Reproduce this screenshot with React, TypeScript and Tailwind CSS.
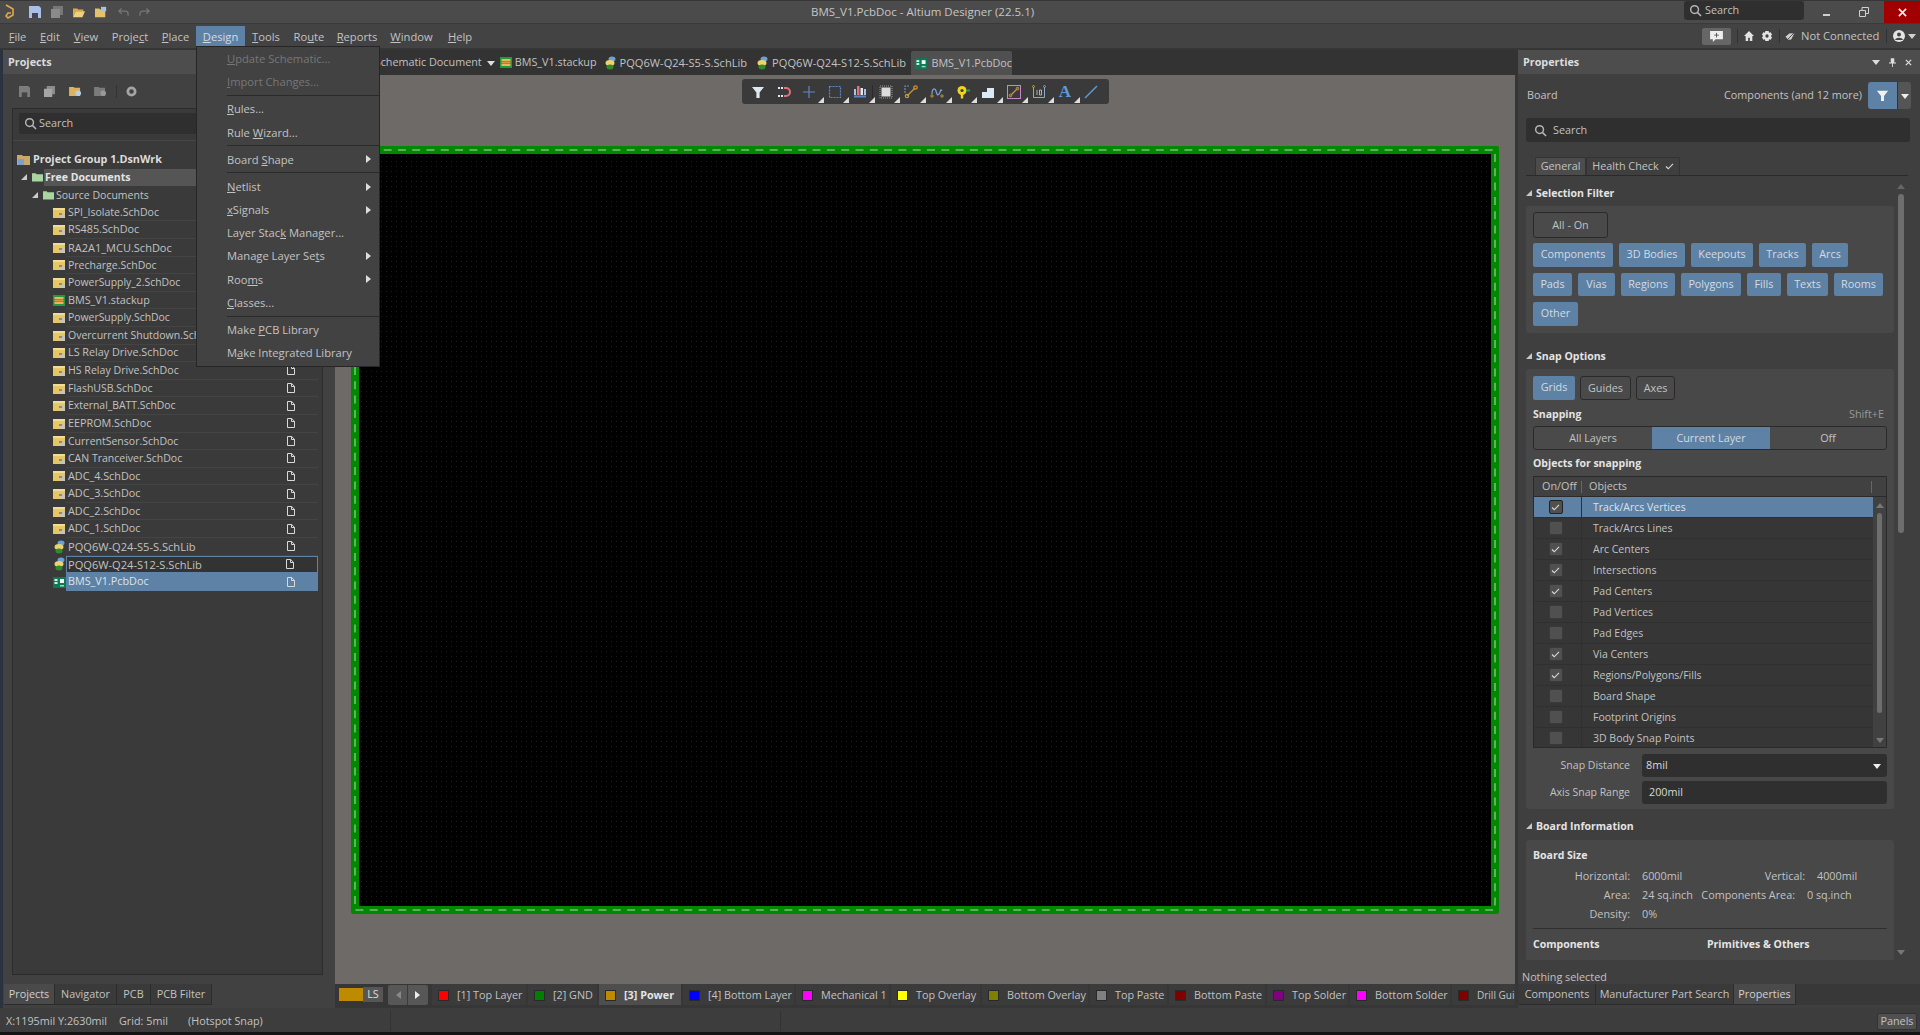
import { ReactNode } from 'react';

const Search = ({ className = '' }: { className?: string }) => (
  <svg viewBox="0 0 14 14" className={`w-[13px] h-[13px] ${className}`} fill="none" stroke="#b5b5b5" strokeWidth="1.6">
    <circle cx="6" cy="6" r="4.2" />
    <path d="M9 9l4 4" />
  </svg>
);

const Tri = ({ dir = 'right', className = '' }: { dir?: 'right' | 'down' | 'up' | 'corner'; className?: string }) => {
  const d = { right: 'M1 0l5 4-5 4z', down: 'M0 2h8L4 7z', up: 'M0 6h8L4 1z', corner: 'M6 1v6H0z' }[dir];
  return (
    <svg viewBox="0 0 8 8" className={`w-[8px] h-[8px] ${className}`} fill="currentColor">
      <path d={d} />
    </svg>
  );
};

const SchIcon = () => (
  <svg viewBox="0 0 12 10" className="w-[12px] h-[10px]">
    <rect width="12" height="10" fill="#e6c766" />
    <rect x="0" y="0" width="12" height="2" fill="#f0dc9a" />
    <rect x="6" y="5" width="6" height="5" fill="#c9c4b4" />
    <rect x="6" y="5" width="3" height="2" fill="#9a8b55" />
  </svg>
);

const StackIcon = () => (
  <svg viewBox="0 0 12 11" className="w-[12px] h-[11px]">
    <rect width="12" height="11" fill="#1f9a3c" />
    <rect x="1.5" y="2" width="9" height="2" fill="#efb45a" />
    <rect x="1.5" y="4.5" width="9" height="2" fill="#d89a45" />
    <rect x="1.5" y="7" width="9" height="2" fill="#efb45a" />
  </svg>
);

const LibIcon = () => (
  <svg viewBox="0 0 12 14" className="w-[12px] h-[14px]">
    <ellipse cx="8" cy="3" rx="3.5" ry="2.5" fill="#6aa0dc" />
    <ellipse cx="6" cy="7" rx="4.5" ry="3" fill="#eed36a" />
    <ellipse cx="6" cy="11" rx="3.5" ry="2.5" fill="#2f8a2f" />
  </svg>
);

const PcbIcon = () => (
  <svg viewBox="0 0 13 11" className="w-[13px] h-[11px]">
    <rect width="13" height="11" fill="#0c7a55" />
    <rect x="1.5" y="2" width="3" height="2" fill="#d5efe5" />
    <rect x="1.5" y="5" width="3" height="2" fill="#d5efe5" />
    <rect x="7" y="2" width="4" height="4" fill="#eef7f3" />
    <rect x="7" y="8" width="4" height="1.5" fill="#9fd8c3" />
  </svg>
);

const FolderIcon = ({ color = '#a8d5a0' }: { color?: string }) => (
  <svg viewBox="0 0 12 10" className="w-[11px] h-[10px]">
    <path d="M0 1h4l1 1h7v8H0z" fill={color} />
  </svg>
);

const DocIcon = () => (
  <svg viewBox="0 0 8 10" className="w-[8px] h-[10px]" fill="none" stroke="#d8d8d8" strokeWidth="1">
    <path d="M.5.5h4.2l2.8 2.8v6.2h-7zM4.5.5v3h3" />
  </svg>
);

const Check = () => (
  <svg viewBox="0 0 10 8" className="w-[9px] h-[7px]" fill="none" stroke="#d8d8d8" strokeWidth="1.3">
    <path d="M1 4l2.6 2.6L9 1" />
  </svg>
);

const toolbarIcons: ReactNode[] = [
  <path key="f" d="M1 2h12L8.6 7.5V13H5.4V7.5z" fill="#dfe8f0" />,
  <g key="m" fill="none" strokeWidth="2">
    <path d="M7 3h2a4 4 0 010 8H7" stroke="#e2717a" />
    <path d="M1 3h2M1 11h2" stroke="#dfe8f0" />
    <path d="M4 3h2M4 11h2" stroke="#dfe8f0" />
  </g>,
  <path key="p" d="M7 1v12M1 7h12" stroke="#5f86c4" strokeWidth="1.2" fill="none" />,
  <rect key="r" x="1.5" y="1.5" width="11" height="11" fill="none" stroke="#5f86c4" strokeWidth="1.2" strokeDasharray="2 1" />,
  <g key="b">
    <rect x="4" y="1" width="2.5" height="9" fill="#e2717a" />
    <rect x="7.5" y="3" width="2.5" height="7" fill="#dfe8f0" />
    <rect x="1" y="4" width="2" height="6" fill="#a9c4de" />
    <rect x="11" y="4" width="2" height="6" fill="#a9c4de" />
    <rect x="1" y="10.5" width="12" height="2" fill="#5f86c4" />
  </g>,
  <g key="c">
    <rect x="1" y="1" width="12" height="12" fill="none" stroke="#999" strokeDasharray="1 1" />
    <rect x="2.5" y="2.5" width="9" height="9" fill="#dcdcdc" />
  </g>,
  <g key="t" fill="none" stroke="#c8963a" strokeWidth="1.2">
    <path d="M3 11l8-8" />
    <path d="M1 8V1h5" stroke="#6b8fc0" strokeDasharray="2 1" />
    <circle cx="3" cy="11" r="1.7" />
    <circle cx="11.5" cy="2.5" r="1.7" />
  </g>,
  <g key="w" fill="none">
    <path d="M2 9c0-6 3-6 4-3s1 5 3 3 1-6 3-3" stroke="#7f9fc9" strokeWidth="1.3" />
    <circle cx="2" cy="11" r="1.2" stroke="#c8963a" />
    <circle cx="12" cy="11" r="1.2" stroke="#c8963a" />
  </g>,
  <g key="y">
    <circle cx="6" cy="5.5" r="4.5" fill="#f2d21e" />
    <circle cx="6" cy="5.5" r="1.6" fill="#3a3a3a" />
    <rect x="4.8" y="9" width="2.4" height="4.5" fill="#f2d21e" />
    <rect x="10" y="4.5" width="4" height="2" fill="#2e9e3e" />
  </g>,
  <path key="s" d="M1 13V7h5V3h7v10z" fill="#dbe9f4" />,
  <g key="q" fill="none">
    <rect x=".5" y=".5" width="13" height="13" stroke="#c58ac5" />
    <path d="M3.5 10.5l7-7" stroke="#c8963a" strokeWidth="1.3" />
    <circle cx="3.5" cy="10.5" r="1.3" fill="#7a5a2a" stroke="#c8963a" />
    <circle cx="10.5" cy="3.5" r="1.3" fill="#7a5a2a" stroke="#c8963a" />
  </g>,
  <g key="d" fill="none" stroke="#8fa9c9" strokeWidth="1">
    <path d="M1.5 2v10.5h11V2" />
    <circle cx="1.5" cy="1.5" r="1" stroke="#c8963a" />
    <circle cx="12.5" cy="1.5" r="1" stroke="#c8963a" />
    <path d="M5 5v5M7.5 5h2v5h-2z" stroke="#b0b0b0" />
  </g>,
  null,
  <path key="l" d="M1 13L13 1" stroke="#5f9ad8" strokeWidth="1.5" fill="none" />,
];

const menus = [
  { pre: '', u: 'F', post: 'ile', w: 'w-[31px]' },
  { pre: '', u: 'E', post: 'dit', w: 'w-[34px]' },
  { pre: '', u: 'V', post: 'iew', w: 'w-[38px]' },
  { pre: 'Proje', u: 'c', post: 't', w: 'w-[50px]' },
  { pre: '', u: 'P', post: 'lace', w: 'w-[41px]' },
  { pre: '', u: 'D', post: 'esign', w: 'w-[49px]', active: true },
  { pre: '', u: 'T', post: 'ools', w: 'w-[42px]' },
  { pre: 'Ro', u: 'u', post: 'te', w: 'w-[44px]' },
  { pre: '', u: 'R', post: 'eports', w: 'w-[52px]' },
  { pre: '', u: 'W', post: 'indow', w: 'w-[57px]' },
  { pre: '', u: 'H', post: 'elp', w: 'w-[40px]' },
];

const designMenu = [
  { pre: '', u: 'U', post: 'pdate Schematic...', off: true },
  { pre: '', u: 'I', post: 'mport Changes...', off: true },
  { sep: true },
  { pre: '', u: 'R', post: 'ules...' },
  { pre: 'Rule ', u: 'W', post: 'izard...' },
  { sep: true },
  { pre: 'Board ', u: 'S', post: 'hape', sub: true },
  { sep: true },
  { pre: '', u: 'N', post: 'etlist', sub: true },
  { pre: '', u: 'x', post: 'Signals', sub: true },
  { pre: 'Layer Stac', u: 'k', post: ' Manager...' },
  { pre: 'Manage Layer Se', u: 't', post: 's', sub: true },
  { pre: 'Roo', u: 'm', post: 's', sub: true },
  { pre: '', u: 'C', post: 'lasses...' },
  { sep: true },
  { pre: 'Make ', u: 'P', post: 'CB Library' },
  { pre: 'M', u: 'a', post: 'ke Integrated Library' },
];

const files = [
  ['SPI_Isolate.SchDoc', 'sch', 'text-[10.5px]'],
  ['RS485.SchDoc', 'sch', ''],
  ['RA2A1_MCU.SchDoc', 'sch', 'text-[11px]'],
  ['Precharge.SchDoc', 'sch', 'text-[10.5px]'],
  ['PowerSupply_2.SchDoc', 'sch', 'text-[10.4px]'],
  ['BMS_V1.stackup', 'stack', ''],
  ['PowerSupply.SchDoc', 'sch', 'text-[10.4px]'],
  ['Overcurrent Shutdown.SchDoc', 'sch', 'text-[10.5px]'],
  ['LS Relay Drive.SchDoc', 'sch', ''],
  ['HS Relay Drive.SchDoc', 'sch', 'text-[10.6px]'],
  ['FlashUSB.SchDoc', 'sch', 'text-[10.5px]'],
  ['External_BATT.SchDoc', 'sch', 'text-[10.4px]'],
  ['EEPROM.SchDoc', 'sch', ''],
  ['CurrentSensor.SchDoc', 'sch', 'text-[10.5px]'],
  ['CAN Tranceiver.SchDoc', 'sch', 'text-[10.5px]'],
  ['ADC_4.SchDoc', 'sch', ''],
  ['ADC_3.SchDoc', 'sch', ''],
  ['ADC_2.SchDoc', 'sch', ''],
  ['ADC_1.SchDoc', 'sch', ''],
  ['PQQ6W-Q24-S5-S.SchLib', 'lib', 'text-[11.1px]'],
  ['PQQ6W-Q24-S12-S.SchLib', 'lib', 'text-[11.1px]'],
  ['BMS_V1.PcbDoc', 'pcb', ''],
];

const layers = [
  { name: '[1] Top Layer', color: 'bg-[#ff0000]', w: 'w-[94px]' },
  { name: '[2] GND', color: 'bg-[#008000]', w: 'w-[69px]' },
  { name: '[3] Power', color: 'bg-[#c08a00]', w: 'w-[82px]', active: true },
  { name: '[4] Bottom Layer', color: 'bg-[#0000ff]', w: 'w-[111px]' },
  { name: 'Mechanical 1', color: 'bg-[#ff00ff]', w: 'w-[93px]' },
  { name: 'Top Overlay', color: 'bg-[#ffff00]', w: 'w-[89px]' },
  { name: 'Bottom Overlay', color: 'bg-[#808000]', w: 'w-[106px]' },
  { name: 'Top Paste', color: 'bg-[#808080]', w: 'w-[77px]' },
  { name: 'Bottom Paste', color: 'bg-[#800000]', w: 'w-[96px]' },
  { name: 'Top Solder', color: 'bg-[#800080]', w: 'w-[81px]' },
  { name: 'Bottom Solder', color: 'bg-[#ff00ff]', w: 'w-[100px]' },
  { name: 'Drill Gui', color: 'bg-[#800000]', w: 'w-[63px]', size: 'text-[10px]' },
];

const filterRows = [
  [
    ['Components', 'w-[80px]'],
    ['3D Bodies', 'w-[66px]'],
    ['Keepouts', 'w-[62px]'],
    ['Tracks', 'w-[47px]'],
    ['Arcs', 'w-[36px]'],
  ],
  [
    ['Pads', 'w-[39px]'],
    ['Vias', 'w-[37px]'],
    ['Regions', 'w-[54px]'],
    ['Polygons', 'w-[60px]'],
    ['Fills', 'w-[34px]'],
    ['Texts', 'w-[41px]'],
    ['Rooms', 'w-[49px]'],
  ],
  [['Other', 'w-[45px]']],
];

const snapObjects: [string, boolean][] = [
  ['Track/Arcs Vertices', true],
  ['Track/Arcs Lines', false],
  ['Arc Centers', true],
  ['Intersections', true],
  ['Pad Centers', true],
  ['Pad Vertices', false],
  ['Pad Edges', false],
  ['Via Centers', true],
  ['Regions/Polygons/Fills', true],
  ['Board Shape', false],
  ['Footprint Origins', false],
  ['3D Body Snap Points', false],
];

const Section = ({ title }: { title: string }) => (
  <div className="flex items-center h-[14px] font-bold text-[10.5px] text-[#e4e4e4]">
    <Tri dir="corner" className="text-[#c8c8c8] mr-[1px] w-[7px] h-[7px]" />
    <span className="ml-[1px]">{title}</span>
  </div>
);

const BlueBtn = ({ label, w }: { label: string; w: string }) => (
  <div className={`${w} h-[23.5px] flex items-center justify-center rounded-[2px] bg-[#5e82a5] text-[#d3dbe3]`}>{label}</div>
);

const GrayBtn = ({ label, w, h = 'h-[24px]' }: { label: string; w: string; h?: string }) => (
  <div className={`${w} ${h} flex items-center justify-center rounded-[3px] bg-[#4a4a4a] border border-[#2a2a2a]`}>{label}</div>
);

const BottomTab = ({ label, w, active = false }: { label: string; w: string; active?: boolean }) => (
  <div className={`${w} h-[21px] pt-[1px] flex items-center justify-center whitespace-nowrap border-b border-r border-[#2c2c2c] ${active ? 'bg-[#4a4a4a] text-[#d0d0d0]' : 'bg-[#3a3a3a]'}`}>
    {label}
  </div>
);

export default function App() {
  return (
    <div className="relative w-[1920px] h-[1035px] flex flex-col overflow-hidden bg-[#363636] text-[#c2c2c2] text-[10.8px] leading-none font-['Open_Sans','Noto_Sans',sans-serif]">
      {/* title bar */}
      <div className="h-[23px] mt-[1px] shrink-0 flex items-center bg-[#4b4b4b] border-b border-[#3a3a3a]">
        <div className="w-[811px] flex items-center pl-[4px] gap-[10px] shrink-0">
          <svg viewBox="0 0 12 16" className="w-[12px] h-[16px]" fill="none" stroke="#e0a94a" strokeWidth="1.6">
            <path d="M2 1l7 4v6l-5 3-2-2 2-3h3" />
          </svg>
          <svg viewBox="0 0 12 12" className="w-[12px] h-[12px] ml-[3px]"><path d="M0 0h10l2 2v10H0z" fill="#a9bfe6" /><rect x="3" y="7" width="6" height="5" fill="#445" /></svg>
          <svg viewBox="0 0 12 12" className="w-[12px] h-[12px]"><path d="M2 0h10v9H2z" fill="#777" /><path d="M0 3h9v9H0z" fill="#8a8a8a" /></svg>
          <svg viewBox="0 0 14 12" className="w-[12px] h-[12px]"><path d="M0 2h5l1 1h6v2H3l-3 7z" fill="#d9a94c" /><path d="M3 5h11l-3 7H0z" fill="#f0cf7f" /></svg>
          <svg viewBox="0 0 14 12" className="w-[12px] h-[12px]"><path d="M0 2h5l1 1h6v9H0z" fill="#e4c26c" /><rect x="7" y="0" width="6" height="5" fill="#a9bfe6" /></svg>
          <svg viewBox="0 0 12 10" className="w-[11px] h-[10px] ml-[1px]" fill="none" stroke="#777" strokeWidth="1.4"><path d="M4 1L1 4l3 3M1 4h7a3 3 0 013 3v2" /></svg>
          <svg viewBox="0 0 12 10" className="w-[11px] h-[10px]" fill="none" stroke="#777" strokeWidth="1.4"><path d="M8 1l3 3-3 3M11 4H4a3 3 0 00-3 3v2" /></svg>
        </div>
        <div className="text-[11.5px] text-[#c6c6c6] whitespace-nowrap">BMS_V1.PcbDoc - Altium Designer (22.5.1)</div>
        <div className="ml-auto flex items-center h-full">
          <div className="w-[120px] h-[19px] mb-[3px] flex items-center pl-[5px] gap-[3px] bg-[#2f2f2f] rounded-[3px]">
            <Search />
            <span>Search</span>
          </div>
          <div className="w-[80px] pl-[4px] flex justify-center gap-[29px] items-center">
            <div className="w-[7px] h-[2px] mt-[6px] bg-[#d0d0d0]" />
            <svg viewBox="0 0 10 10" className="w-[10px] h-[10px]" fill="none" stroke="#d0d0d0"><path d="M.5 3.5h6v6h-6zM3 3.5v-3h6.5v6H6.5" /></svg>
          </div>
          <div className="w-[36px] h-full flex items-center justify-center bg-[#a00000]">
            <svg viewBox="0 0 10 10" className="w-[9px] h-[9px]" stroke="#f2f2f2" strokeWidth="1.8"><path d="M1 1l8 8M9 1l-8 8" /></svg>
          </div>
        </div>
      </div>

      {/* menu bar */}
      <div className="h-[24px] shrink-0 flex items-center pl-[2px] bg-[#434343] text-[11.2px]">
        {menus.map((m) => (
          <div key={m.u + m.post} className={`${m.w} h-[21px] pt-[1px] flex items-center justify-center ${m.active ? 'bg-[#5e82a5] text-[#d3dbe3]' : ''}`}>
            <span>{m.pre}<u>{m.u}</u>{m.post}</span>
          </div>
        ))}
        <div className="ml-auto flex items-center h-full">
          <div className="w-[29px] h-[17px] flex items-center justify-center bg-[#666] rounded-[2px]">
            <svg viewBox="0 0 14 12" className="w-[13px] h-[11px]"><path d="M0 0h14v9H6l-3 3V9H0z" fill="#eee" /><path d="M7 2v5M4.5 4.5h5" stroke="#555" /></svg>
          </div>
          <div className="w-px h-[14px] bg-[#333] ml-[6px]" />
          <svg viewBox="0 0 12 12" className="w-[10px] h-[10px] ml-[6px]" fill="#e4e4e4"><path d="M6 0l6 6h-2v6H7V8H5v4H2V6H0z" /></svg>
          <svg viewBox="0 0 12 12" className="w-[10px] h-[10px] ml-[8px]"><path d="M4 0h4l.5 2 2-.5 1.5 3-1.5 1.5 1.5 1.5-1.5 3-2-.5L8 12H4l-.5-2-2 .5L0 7.5 1.5 6 0 4.5l1.5-3 2 .5z" fill="#e4e4e4" /><circle cx="6" cy="6" r="2" fill="#434343" /></svg>
          <div className="w-px h-[14px] bg-[#333] ml-[7px]" />
          <svg viewBox="0 0 12 10" className="w-[11px] h-[9px] ml-[5px]" fill="#d0d0d0"><path d="M0 5l5-4h6L7 9H3zM1 10L11 0" stroke="#434343" /></svg>
          <span className="ml-[5px] w-[80px] whitespace-nowrap">Not Connected</span>
          <div className="w-px h-[14px] bg-[#333] ml-[5px]" />
          <svg viewBox="0 0 12 12" className="w-[12px] h-[12px] ml-[6px]"><circle cx="6" cy="6" r="6" fill="#e4e4e4" /><circle cx="6" cy="4.5" r="2" fill="#434343" /><path d="M2 10c1-3 7-3 8 0" fill="#434343" /></svg>
          <Tri dir="down" className="text-[#d0d0d0] ml-[3px] mr-[4px]" />
        </div>
      </div>

      {/* panels */}
      <div className="flex-1 min-h-0 flex mt-[2px]">
        {/* projects panel */}
        <div className="w-[335px] shrink-0 flex flex-col border-l-[3px] border-[#2b3240] bg-[#414141]">
          <div className="h-[24px] shrink-0 flex items-center pl-[5px] bg-[#4d4d4d] font-bold text-[#dcdcdc]">Projects</div>
          <div className="h-[34px] shrink-0 flex items-center pl-[16px]">
            <svg viewBox="0 0 12 12" className="w-[11px] h-[11px]"><path d="M0 0h10l2 2v10H0z" fill="#7d7d7d" /><rect x="3" y="7" width="6" height="5" fill="#444" /></svg>
            <svg viewBox="0 0 12 12" className="w-[11px] h-[11px] ml-[14px]"><path d="M3 0h9v9H3z" fill="#8c8c8c" /><path d="M0 3h9v9H0z" fill="#a5a5a5" /></svg>
            <svg viewBox="0 0 14 12" className="w-[13px] h-[11px] ml-[14px]"><path d="M0 1h5l1 1h6v9H0z" fill="#dcb25f" /><circle cx="10" cy="8" r="3" fill="#b9cfe6" /></svg>
            <svg viewBox="0 0 14 12" className="w-[13px] h-[11px] ml-[12px]"><path d="M0 1h5l1 1h6v9H0z" fill="#7b7b7b" /><circle cx="10" cy="8" r="3" fill="#999" /></svg>
            <div className="w-px h-[13px] bg-[#333] ml-[9px]" />
            <svg viewBox="0 0 12 12" className="w-[11px] h-[11px] ml-[9px]"><circle cx="6" cy="6" r="4" fill="none" stroke="#a5a5a5" strokeWidth="3" /></svg>
          </div>
          <div className="flex-1 min-h-0 ml-[9px] mr-[12px] border border-[#2c2c2c] bg-[#3a3a3a] overflow-hidden">
            <div className="h-[21px] mt-[4px] mx-[6px] flex items-center pl-[5px] gap-[2px] rounded-[2px] bg-[#2f2f2f]">
              <Search />
              <span>Search</span>
            </div>
            <div className="h-px mt-[6px] bg-[#464646]" />
            <div className="mt-[10px]">
              <div className="h-[17.6px] flex items-center pl-[4px] font-bold text-[#dcdcdc]">
                <svg viewBox="0 0 13 11" className="w-[13px] h-[11px]"><path d="M0 1h5l1 1h7v9H0z" fill="#c8a96a" /><rect x="1" y="5" width="6" height="6" fill="#7ea0c8" /></svg>
                <span className="ml-[3px]">Project Group 1.DsnWrk</span>
              </div>
              <div className="h-[17.6px] flex items-center pl-[8px] font-bold text-[10.5px] text-[#e4e4e4]">
                <Tri dir="corner" className="w-[6px] h-[6px] text-[#ccc]" />
                <span className="ml-[3px]"><FolderIcon /></span>
                <div className="ml-[1px] mr-[4px] pl-[1px] flex-1 h-full flex items-center bg-[#555]">Free Documents</div>
              </div>
              <div className="h-[17.6px] flex items-center pl-[19px] text-[10.5px]">
                <Tri dir="corner" className="w-[6px] h-[6px] text-[#ccc]" />
                <span className="ml-[3px]"><FolderIcon /></span>
                <span className="ml-[2px]">Source Documents</span>
              </div>
              {files.map(([name, kind, size]) => {
                const selected = name === 'BMS_V1.PcbDoc';
                const focused = name === 'PQQ6W-Q24-S12-S.SchLib';
                return (
                  <div key={name} className="h-[17.6px] flex items-center pl-[40px] mr-[4px]">
                    <span className="w-[13px] shrink-0 flex items-center">
                      {kind === 'sch' && <SchIcon />}
                      {kind === 'stack' && <StackIcon />}
                      {kind === 'lib' && <LibIcon />}
                      {kind === 'pcb' && <PcbIcon />}
                    </span>
                    <div className={`flex-1 h-full flex items-center pr-[23px] border-b ${selected ? 'pl-[2px] bg-[#5e82a5] border-[#5e82a5] text-[#dbe3ea]' : focused ? 'pl-[1px] border border-[#5e82a5] bg-[#333]' : 'pl-[2px] border-[#444]'}`}>
                      <span className={`flex-1 whitespace-nowrap ${size}`}>{name}</span>
                      <DocIcon />
                    </div>
                  </div>
                );
              })}
            </div>
          </div>
          <div className="h-[9px] shrink-0" />
          <div className="h-[21px] shrink-0 flex ml-px">
            <BottomTab label="Projects" w="w-[51px]" active />
            <BottomTab label="Navigator" w="w-[62px]" />
            <BottomTab label="PCB" w="w-[34px]" />
            <BottomTab label="PCB Filter" w="w-[61px]" />
          </div>
          <div className="h-[3px] shrink-0" />
        </div>

        {/* documents and canvas */}
        <div className="w-[1183px] shrink-0 flex flex-col">
          <div className="h-[25px] shrink-0 flex items-center justify-end pr-[503px] bg-[#333] border-r-[3px] border-[#333]">
            <span className="whitespace-nowrap">Schematic Document</span>
            <Tri dir="down" className="ml-[5px] text-[#ddd]" />
            <span className="ml-[5px]"><StackIcon /></span>
            <span className="ml-[3px] whitespace-nowrap">BMS_V1.stackup</span>
            <span className="ml-[7px]"><LibIcon /></span>
            <span className="ml-[4px] whitespace-nowrap text-[11.1px]">PQQ6W-Q24-S5-S.SchLib</span>
            <span className="ml-[9px]"><LibIcon /></span>
            <span className="ml-[4px] whitespace-nowrap text-[11.1px]">PQQ6W-Q24-S12-S.SchLib</span>
            <div className="ml-[5px] w-[101px] shrink-0 h-[24px] mt-px flex items-center pl-[4px] gap-[4px] bg-[#505050] rounded-t-[2px]">
              <PcbIcon />
              <span className="whitespace-nowrap">BMS_V1.PcbDoc</span>
            </div>
          </div>
          <div className="relative flex-1 min-h-0 mr-[3px] pt-[71px] pl-[16px] bg-[#6e6a68]">
            <div className="absolute left-[407px] top-[4px] w-[367px] h-[25px] flex items-center pl-[9px] bg-[#3a3a3a] rounded-[3px]">
              {toolbarIcons.map((icon, i) => (
                <div key={i} className="relative w-[25.7px] h-full flex items-center">
                  {icon ? (
                    <svg viewBox="0 0 14 14" className="w-[14px] h-[14px]">{icon}</svg>
                  ) : (
                    <span className="w-[14px] text-center font-['Liberation_Serif',serif] font-bold text-[17px] text-[#5f9ad8]">A</span>
                  )}
                  {i > 1 && i < 13 && <Tri dir="corner" className="absolute right-[2px] bottom-0 w-[5px] h-[5px] text-[#ddd]" />}
                  {i === 4 && <div className="absolute right-[6px] top-[6px] w-px h-[13px] bg-[#2a2a2a]" />}
                </div>
              ))}
            </div>
            <div className="relative w-[1148px] h-[768px] border-[8px] border-[#008800] rounded-[2px] bg-black bg-[radial-gradient(#1c1c1c_0.6px,transparent_0.6px)] bg-[length:5px_5px]">
              <svg className="absolute -left-[8px] -top-[8px] w-[1148px] h-[768px]" fill="none">
                <rect x="4" y="4" width="1140" height="760" stroke="#7db87d" strokeWidth="1.6" strokeDasharray="8 6.3" />
              </svg>
            </div>
          </div>
          <div className="h-[21px] shrink-0 flex items-center pl-[4px] mr-[3px]">
            <div className="w-[24px] h-[13px] bg-[#bd8a00]" />
            <div className="w-[20px] h-[15px] flex items-center justify-center bg-[#565656] text-[#ddd]">LS</div>
            <div className="ml-[5px] w-[40px] h-[20px] flex rounded-[2px] bg-[#575757]">
              <div className="w-[20px] flex items-center justify-center border-r border-[#3a3a3a]"><Tri dir="right" className="rotate-180 text-[#888]" /></div>
              <div className="w-[20px] flex items-center justify-center"><Tri dir="right" className="text-[#eee]" /></div>
            </div>
            <div className="ml-[4px] flex gap-[2px] h-full">
              {layers.map((l) => (
                <div key={l.name} className={`${l.w} ${l.size ?? ''} pt-[1px] shrink-0 flex items-center pl-[6px] whitespace-nowrap ${l.active ? 'bg-[#4e4e4e] font-bold text-[#e4e4e4]' : 'bg-[#3b3b3b]'}`}>
                  <span className={`${l.color} w-[11px] h-[11px] shrink-0 border border-[#2a2a2a]`} />
                  <span className="ml-[8px]">{l.name}</span>
                </div>
              ))}
            </div>
          </div>
          <div className="h-[3px] shrink-0" />
        </div>

        {/* properties panel */}
        <div className="flex-1 min-w-0 flex flex-col bg-[#3f3f3f]">
          <div className="h-[24px] shrink-0 flex items-center pl-[5px] pr-[8px] bg-[#4d4d4d] font-bold text-[#dcdcdc]">
            <span>Properties</span>
            <Tri dir="down" className="ml-auto text-[#ddd]" />
            <svg viewBox="0 0 8 10" className="w-[7px] h-[9px] ml-[9px]" fill="#ddd"><path d="M2 0h4v5h2v1H4.5v4h-1V6H0V5h2z" /></svg>
            <svg viewBox="0 0 8 8" className="w-[7px] h-[7px] ml-[9px]" stroke="#ddd" strokeWidth="1.5"><path d="M1 1l6 6M7 1L1 7" /></svg>
          </div>
          <div className="h-[27px] mt-[8px] mx-[9px] flex items-center shrink-0">
            <span>Board</span>
            <span className="ml-auto whitespace-nowrap">Components (and 12 more)</span>
            <div className="ml-[6px] w-[29px] h-full flex items-center justify-center rounded-l-[3px] bg-[#5e82a5]">
              <svg viewBox="0 0 14 14" className="w-[13px] h-[13px]"><path d="M1 2h12L8.6 7.5V13H5.4V7.5z" fill="#f2f2f2" /></svg>
            </div>
            <div className="w-[14px] h-full flex items-center justify-center rounded-r-[3px] bg-[#555] border-l border-[#333]">
              <Tri dir="down" className="text-[#eee]" />
            </div>
          </div>
          <div className="h-[24px] mt-[9px] ml-[8px] mr-[10px] shrink-0 flex items-center pl-[8px] rounded-[3px] bg-[#2f2f2f]">
            <Search />
            <span className="ml-[6px]">Search</span>
          </div>
          <div className="h-[19px] mt-[15px] ml-[8px] mr-[12px] shrink-0 flex pl-[9px] border-b border-[#2a2a2a]">
            <div className="w-[51px] flex items-center justify-center rounded-t-[2px] bg-[#4c4c4c] border border-b-0 border-[#333]">General</div>
            <div className="w-[94px] flex items-center justify-center gap-[6px] rounded-t-[2px] border border-b-0 border-[#333]">
              <span>Health Check</span>
              <Check />
            </div>
          </div>
          <div className="flex-1 min-h-0 flex">
            <div className="w-[376px] shrink-0 pl-[8px] overflow-hidden">
              <div className="mt-[10px]"><Section title="Selection Filter" /></div>
              <div className="mt-[6px] h-[127px] px-[7px] pt-[6px] rounded-[3px] bg-[#484848]">
                <GrayBtn label="All - On" w="w-[75px]" h="h-[26px]" />
                <div className="mt-[5px] flex flex-col gap-[6px]">
                  {filterRows.map((row, i) => (
                    <div key={i} className="flex gap-[6px]">
                      {row.map(([label, w]) => <BlueBtn key={label} label={label} w={w} />)}
                    </div>
                  ))}
                </div>
              </div>
              <div className="mt-[16px]"><Section title="Snap Options" /></div>
              <div className="mt-[6px] h-[440px] px-[7px] pt-[7px] rounded-[3px] bg-[#484848]">
                <div className="flex gap-[5px]">
                  <BlueBtn label="Grids" w="w-[42px]" />
                  <GrayBtn label="Guides" w="w-[51px]" />
                  <GrayBtn label="Axes" w="w-[39px]" />
                </div>
                <div className="mt-[7px] h-[14px] flex items-center justify-between pr-[3px]">
                  <span className="font-bold text-[10.5px] text-[#e4e4e4]">Snapping</span>
                  <span className="text-[#999]">Shift+E</span>
                </div>
                <div className="mt-[5px] h-[24px] flex rounded-[3px] border border-[#2a2a2a] bg-[#4a4a4a]">
                  <div className="w-[118px] flex items-center justify-center">All Layers</div>
                  <div className="w-[118px] flex items-center justify-center bg-[#5e82a5] text-[#d3dbe3]">Current Layer</div>
                  <div className="flex-1 flex items-center justify-center">Off</div>
                </div>
                <div className="mt-[6px] h-[14px] flex items-center font-bold text-[10.5px] text-[#e4e4e4]">Objects for snapping</div>
                <div className="mt-[6px] h-[272px] flex flex-col overflow-hidden border border-[#2a2a2a] bg-[#363636]">
                  <div className="h-[20px] shrink-0 flex items-center border-b border-[#2a2a2a] bg-[#414141]">
                    <div className="w-[48px] h-[12px] flex items-center pl-[8px] border-r border-[#666]">On/Off</div>
                    <div className="flex-1 h-[12px] flex items-center pl-[7px] border-r border-[#666] mr-[14px]">Objects</div>
                  </div>
                  <div className="flex-1 min-h-0 flex">
                    <div className="w-[339px] shrink-0 text-[10.5px]">
                      {snapObjects.map(([label, on], i) => (
                        <div key={label} className={`h-[21px] flex items-center border-b border-[#303030] ${i === 0 ? 'bg-[#5e82a5] text-[#dbe3ea]' : ''}`}>
                          <div className="w-[48px] h-full flex items-center justify-center pr-[4px] border-r border-[#303030]">
                            <div className={`w-[14px] h-[14px] flex items-center justify-center rounded-[2px] bg-[#505050] border ${i === 0 ? 'border-[#222]' : 'border-[#3a3a3a]'}`}>
                              {on && <Check />}
                            </div>
                          </div>
                          <span className="ml-[11px]">{label}</span>
                        </div>
                      ))}
                    </div>
                    <div className="flex-1 flex flex-col items-center pt-[5px] bg-[#414141]">
                      <Tri dir="up" className="w-[6px] h-[6px] text-[#777]" />
                      <div className="mt-[3px] w-[5px] h-[200px] rounded-[3px] bg-[#6e6e6e]" />
                      <Tri dir="down" className="mt-[23px] w-[6px] h-[6px] text-[#777]" />
                    </div>
                  </div>
                </div>
                <div className="mt-[6px] flex items-center">
                  <span className="w-[98px] text-right pr-[1px] text-[10.5px]">Snap Distance</span>
                  <div className="ml-[11px] flex-1 h-[23px] flex items-center pl-[4px] pr-[6px] rounded-[3px] bg-[#2f2f2f] text-[#d8d8d8]">
                    <span>8mil</span>
                    <Tri dir="down" className="ml-auto text-[#eee]" />
                  </div>
                </div>
                <div className="mt-[4px] flex items-center">
                  <span className="w-[98px] text-right pr-[1px] text-[10.5px]">Axis Snap Range</span>
                  <div className="ml-[11px] flex-1 h-[23px] flex items-center pl-[7px] rounded-[3px] bg-[#2f2f2f] text-[#d8d8d8]">200mil</div>
                </div>
              </div>
              <div className="mt-[10px]"><Section title="Board Information" /></div>
              <div className="mt-[7px] px-[7px] pt-[8px] h-[130px] rounded-[3px] bg-[#484848]">
                <div className="h-[14px] flex items-center font-bold text-[10.5px] text-[#e4e4e4]">Board Size</div>
                <div className="mt-[4.5px] h-[19px] flex items-center">
                  <span className="w-[97px] text-right">Horizontal:</span>
                  <span className="ml-[12px] w-[50px]">6000mil</span>
                  <span className="w-[113px] text-right whitespace-nowrap">Vertical:</span>
                  <span className="ml-[12px]">4000mil</span>
                </div>
                <div className="h-[19px] flex items-center">
                  <span className="w-[97px] text-right">Area:</span>
                  <span className="ml-[12px] w-[50px] whitespace-nowrap">24 sq.inch</span>
                  <span className="w-[103px] text-right whitespace-nowrap">Components Area:</span>
                  <span className="ml-[12px]">0 sq.inch</span>
                </div>
                <div className="h-[19px] flex items-center">
                  <span className="w-[97px] text-right">Density:</span>
                  <span className="ml-[12px]">0%</span>
                </div>
                <div className="h-px mt-[4.5px] bg-[#2f2f2f]" />
                <div className="mt-[8px] h-[14px] flex items-center font-bold text-[10.5px] text-[#e4e4e4]">
                  <span className="w-[174px]">Components</span>
                  <span>Primitives &amp; Others</span>
                </div>
              </div>
            </div>
            <div className="w-[14px] flex flex-col items-center pt-[7px] pb-[4px]">
              <Tri dir="up" className="w-[7px] h-[7px] text-[#666]" />
              <div className="mt-[3px] w-[6px] h-[339px] rounded-[3px] bg-[#6e6e6e]" />
              <Tri dir="down" className="mt-auto w-[7px] h-[7px] text-[#777]" />
            </div>
          </div>
          <div className="h-[24px] shrink-0 flex items-center pt-[10px] pl-[4px]">Nothing selected</div>
          <div className="h-[21px] shrink-0 flex pl-px bg-[#383838]">
            <BottomTab label="Components" w="w-[77px]" />
            <BottomTab label="Manufacturer Part Search" w="w-[138px]" />
            <BottomTab label="Properties" w="w-[62px]" active />
          </div>
          <div className="h-[3px] shrink-0" />
        </div>
      </div>

      {/* status bar */}
      <div className="h-[24px] shrink-0 flex items-center pt-[2px] bg-[#3d3d3d]">
        <span className="ml-[6px] w-[113px] whitespace-nowrap">X:1195mil Y:2630mil</span>
        <span className="w-[69px] whitespace-nowrap">Grid: 5mil</span>
        <span className="w-[202px] whitespace-nowrap">(Hotspot Snap)</span>
        <div className="w-px h-[20px] bg-[#333]" />
        <div className="w-[389px]" />
        <div className="w-px h-[20px] bg-[#333]" />
        <div className="ml-auto mr-[3px] w-[40px] h-[17px] flex items-center justify-center rounded-[2px] bg-[#505050] border border-[#333]">Panels</div>
      </div>
      <div className="h-[3px] shrink-0 bg-[#141414]" />

      {/* open design menu */}
      <div className="absolute left-[196px] top-[46px] w-[184px] h-[321px] flex flex-col bg-[#424242] border border-[#262626] text-[11.2px]">
        {designMenu.map((item, i) =>
          item.sep ? (
            <div key={i} className="h-[4px] shrink-0 ml-[30px] flex items-center"><div className="h-px w-full bg-[#2a2a2a]" /></div>
          ) : (
            <div key={i} className={`h-[23.2px] shrink-0 flex items-center pl-[30px] pr-[6px] whitespace-nowrap ${item.off ? 'text-[#777]' : ''}`}>
              <span>{item.pre}<u>{item.u}</u>{item.post}</span>
              {item.sub && <Tri dir="right" className="ml-auto text-[#ddd]" />}
            </div>
          ),
        )}
      </div>
    </div>
  );
}
